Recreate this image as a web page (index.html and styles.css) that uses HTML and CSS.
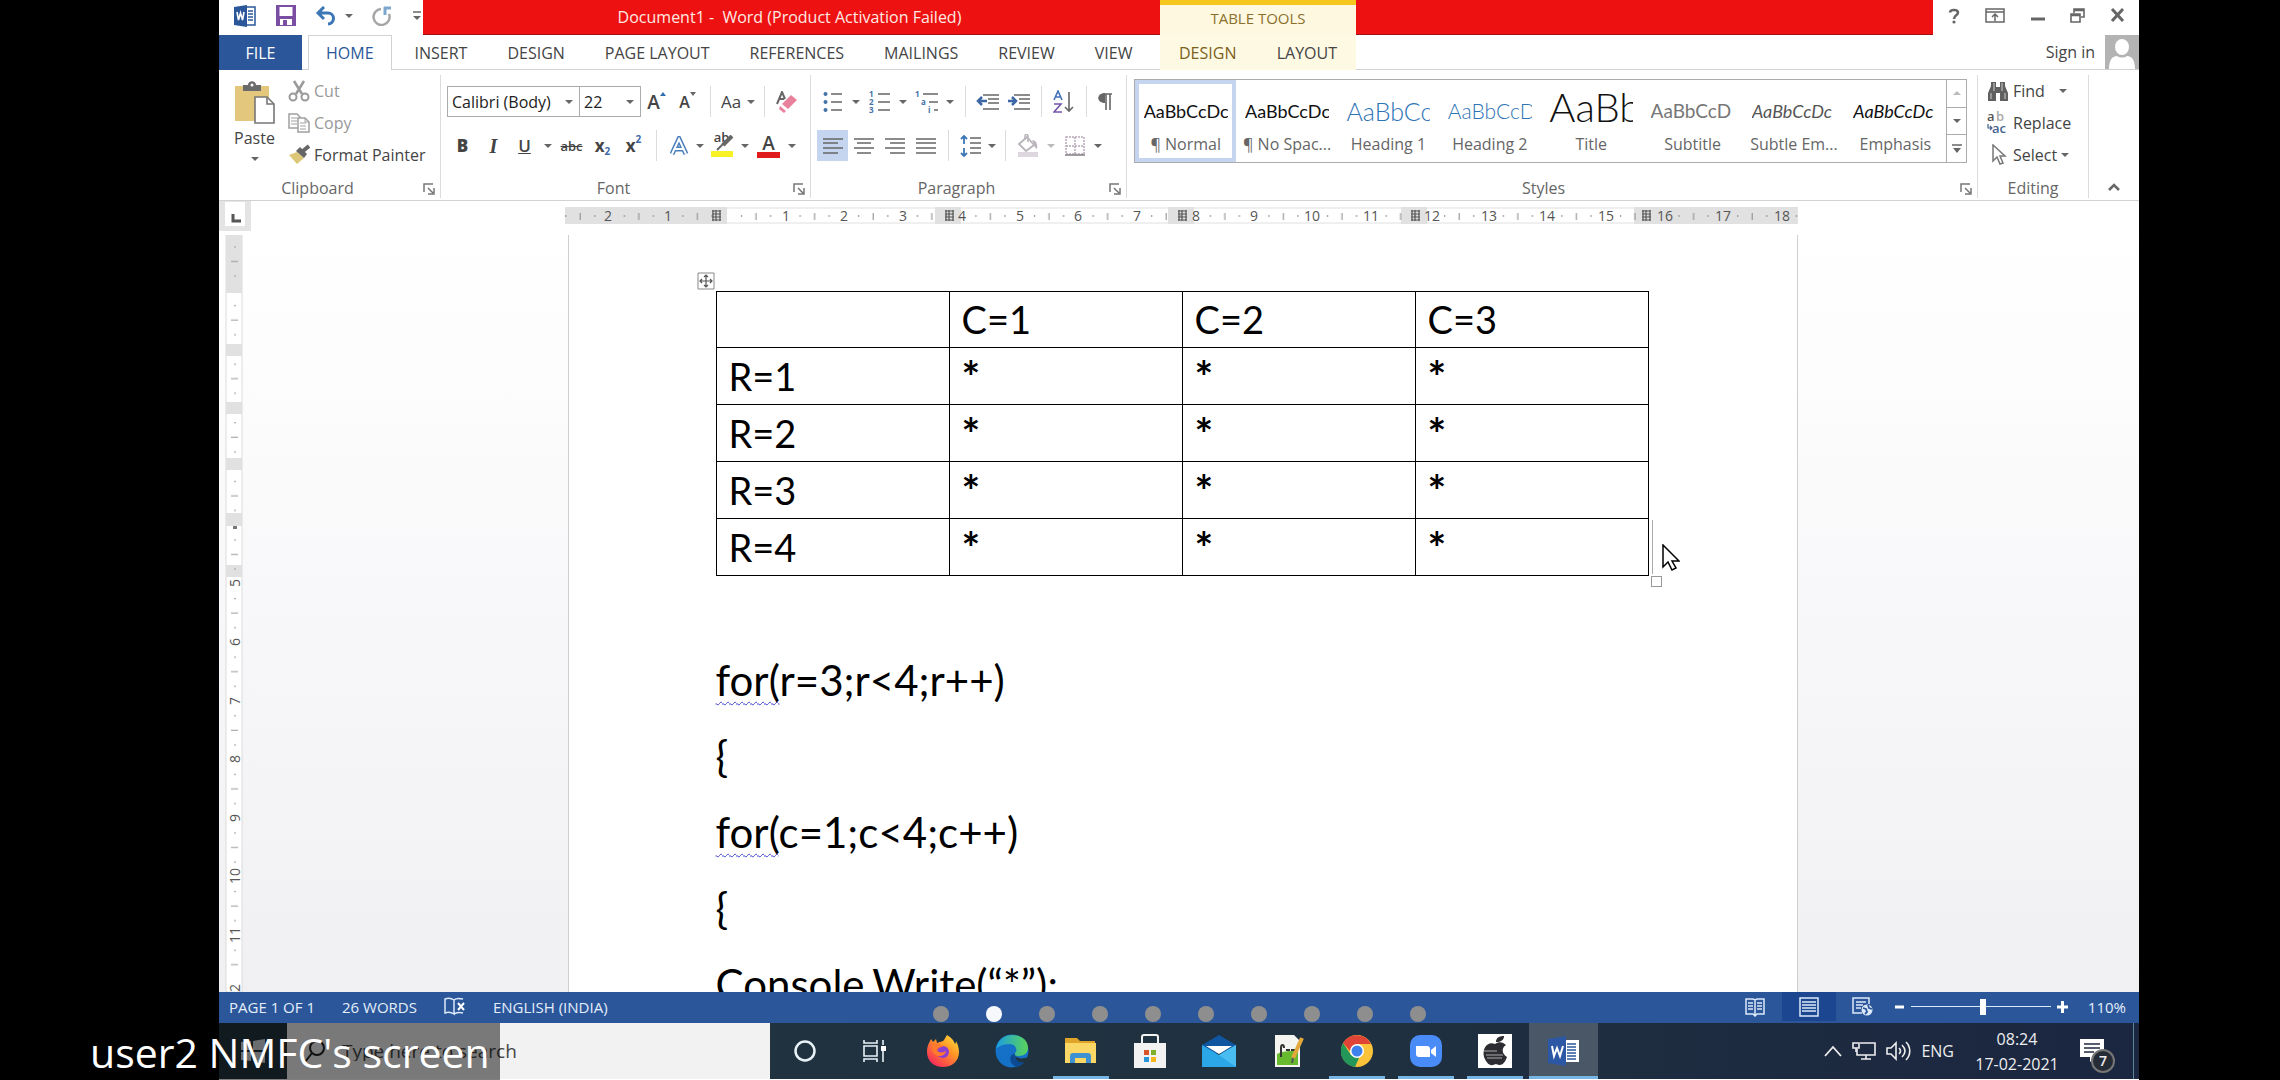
FILE: index.html
```html
<!DOCTYPE html>
<html lang="en">
<head>
  <meta charset="UTF-8">
  <title>Document1 - Word</title>
  <link rel="stylesheet" href="styles.css">
</head>
<body>
  <div class="share">
    <header class="header">
      <div class="titlebar">
        <div class="quick">
          <svg width="24" height="24" viewBox="0 0 24 24"><path d="M12 3h10v18H12z" fill="#fff" stroke="#2b579a" stroke-width="1.5"/><path d="M15 7h5M15 10h5M15 13h5M15 16h5" stroke="#2b579a" stroke-width="1.5"/><path d="M1 3l13-2v22L1 21z" fill="#2b579a"/><path d="M4 8l1.500 8 2-7 2 7L11 8" fill="none" stroke="#fff" stroke-width="1.600"/></svg>
          <button class="plain" aria-label="Save"><svg width="20" height="21" viewBox="0 0 20 21"><path d="M1 1h18v19H1z" fill="#fff" stroke="#7a4fa3" stroke-width="2"/><path d="M1 11h18v9H1z" fill="#7a4fa3"/><path d="M4 14h12v6H4z" fill="#fff"/><path d="M7 15h4v5H7z" fill="#7a4fa3"/><path d="M2 2v10M18 2v10" stroke="#7a4fa3" stroke-width="3"/></svg></button>
          <button class="plain undo" aria-label="Undo"><svg width="22" height="20" viewBox="0 0 22 20"><path d="M3 7h10a5 5 0 0 1 0 11M9 1L3 7l6 6" fill="none" stroke="#3d77b5" stroke-width="3"/></svg><span class="caret"></span></button>
          <button class="plain" aria-label="Repeat"><svg width="22" height="20" viewBox="0 0 22 20"><path d="M9 3a8 8 0 1 0 8 5" fill="none" stroke="#a6a6a6" stroke-width="2.500"/><path d="M12 2h7M13 1v8" stroke="#7da7cf" stroke-width="3"/></svg></button>
          <button class="plain" aria-label="Customize"><svg width="8" height="10" viewBox="0 0 8 10"><path d="M0 1h8" stroke="#666" stroke-width="1.500"/><path d="M0 5h8L4 9z" fill="#666"/></svg></button>
        </div>
        <div class="title">Document1 -&nbsp; Word (Product Activation Failed)</div>
      </div>
      <div class="context-title">TABLE TOOLS</div>
      <div class="title-rest"></div>
      <div class="window-controls">
        <button class="plain" aria-label="Help"><svg width="12" height="16" viewBox="0 0 12 16"><path d="M2 4.500C2 1 10 1 10 4.500 10 7.500 6 7 6 11" fill="none" stroke="#666" stroke-width="2.500"/><circle cx="6" cy="14" r="1.600" fill="#666"/></svg></button>
        <button class="plain" aria-label="Ribbon display options"><svg width="20" height="16" viewBox="0 0 20 16"><path d="M1 1h18v13H1zM1 4h18M10 13V6M7 9l3-3 3 3" fill="none" stroke="#666" stroke-width="1.500"/></svg></button>
        <button class="plain" aria-label="Minimize"><svg width="14" height="16" viewBox="0 0 14 16"><path d="M0 11h14" stroke="#666" stroke-width="3"/></svg></button>
        <button class="plain" aria-label="Restore"><svg width="15" height="15" viewBox="0 0 15 15"><path d="M4 5V1h10v8h-3M4 2.500h10" fill="none" stroke="#666" stroke-width="1.600"/><path d="M1 6h9v8H1zM1 7.500h9" fill="none" stroke="#666" stroke-width="1.600"/></svg></button>
        <button class="plain" aria-label="Close"><svg width="15" height="15" viewBox="0 0 15 15"><path d="M2 1l11 12M13 1L2 13" stroke="#666" stroke-width="3"/></svg></button>
      </div>
      <nav class="tabs">
        <a href="#" class="file">FILE</a>
        <a href="#" class="tab active">HOME</a>
        <a href="#" class="tab">INSERT</a>
        <a href="#" class="tab">DESIGN</a>
        <a href="#" class="tab">PAGE LAYOUT</a>
        <a href="#" class="tab">REFERENCES</a>
        <a href="#" class="tab">MAILINGS</a>
        <a href="#" class="tab">REVIEW</a>
        <a href="#" class="tab">VIEW</a>
      </nav>
      <nav class="context-tabs">
        <a href="#" class="gold">DESIGN</a>
        <a href="#">LAYOUT</a>
      </nav>
      <div class="account">
        <a href="#">Sign in</a>
        <svg width="34" height="34" viewBox="0 0 34 34"><path d="M0 0h34v34H0z" fill="#b3b3b3"/><ellipse cx="17" cy="12" rx="7" ry="8" fill="#fff"/><path d="M4 34c0-10 4-13 8-13 3 2 7 2 10 0 4 0 8 3 8 13z" fill="#fff"/></svg>
      </div>
    </header>

    <section class="ribbon">
      <div class="group clipboard">
        <div class="group-body">
          <button class="paste">
            <svg width="42" height="44" viewBox="0 0 42 44"><path d="M1 5h34v35H1z" fill="#e3c77c"/><path d="M9 10V4h5c0-5 8-5 8 0h5v6z" fill="#6b6b6b"/><circle cx="18" cy="4" r="1.500" fill="#fff"/><path d="M21 16h12l7 7v19H21z" fill="#fff" stroke="#777" stroke-width="1.600"/><path d="M33 16v7h7" fill="none" stroke="#777" stroke-width="1.600"/></svg>
            Paste
            <span class="caret"></span>
          </button>
          <div class="stack">
            <button class="row-btn dim"><svg width="22" height="22" viewBox="0 0 22 22"><path d="M6 1l8 13M16 1L8 14" stroke="#9a9a9a" stroke-width="2.500"/><circle cx="5" cy="17" r="3.500" fill="none" stroke="#9a9a9a" stroke-width="2"/><circle cx="17" cy="17" r="3.500" fill="none" stroke="#9a9a9a" stroke-width="2"/></svg>Cut</button>
            <button class="row-btn dim"><svg width="22" height="22" viewBox="0 0 22 22"><path d="M1 2h8l3 3v11H1z" fill="#fff" stroke="#a0a0a0" stroke-width="1.500"/><path d="M3 6h6M3 9h6M3 12h6" stroke="#a0a0a0"/><path d="M10 6h7l4 4v10H10z" fill="#fff" stroke="#a0a0a0" stroke-width="1.500"/><path d="M12 11h6M12 14h6M12 17h6M17 6v4h4" fill="none" stroke="#a0a0a0"/></svg>Copy</button>
            <button class="row-btn"><svg width="22" height="22" viewBox="0 0 22 22"><path d="M1 11l8-3 7 6-7 6z" fill="#dcc778"/><path d="M8 7l4-4 7 7-3 4z" fill="#666"/><path d="M15 7l6-5" stroke="#666" stroke-width="4"/></svg>Format Painter</button>
          </div>
        </div>
        <div class="group-label"><span>Clipboard</span><svg class="launcher" width="12" height="12" viewBox="0 0 12 12"><path d="M1 9V1h9M5 5l5 5M11 5v6H5" fill="none" stroke="#777" stroke-width="1.500"/></svg></div>
      </div>

      <div class="group font">
        <div class="tool-rows">
          <div class="tools">
            <label class="combo combo-font"><select aria-label="Font"><option>Calibri (Body)</option></select><span class="caret"></span></label>
            <label class="combo combo-size"><select aria-label="Font size"><option>22</option></select><span class="caret"></span></label>
            <button class="tool" aria-label="Grow font"><span class="big-a">A</span><svg class="up" width="6" height="12" viewBox="0 0 6 12"><path d="M0 5h6L3 1z" fill="#2f6db0"/></svg></button>
            <button class="tool" aria-label="Shrink font"><span class="small-a">A</span><svg class="up" width="6" height="12" viewBox="0 0 6 12"><path d="M0 1h6L3 5z" fill="#666"/></svg></button>
            <span class="sep"></span>
            <button class="tool case">Aa</button><span class="caret-box tight"><span class="caret"></span></span>
            <span class="sep"></span>
            <button class="tool" aria-label="Clear formatting"><svg width="22" height="22" viewBox="0 0 22 22"><path d="M1 13L6 1l3 7M3 8h5" fill="none" stroke="#666" stroke-width="2"/><path d="M6 13l9-9 6 5-9 9z" fill="#e8829c"/><path d="M4 15l6 5-2 2-5-4z" fill="#e8829c"/></svg></button>
          </div>
          <div class="tools">
            <button class="tool bold">B</button>
            <button class="tool italic">I</button>
            <button class="tool under">U</button><span class="caret-box"><span class="caret"></span></span>
            <button class="tool strike">abc</button>
            <button class="tool script">x<sub>2</sub></button>
            <button class="tool script">x<sup>2</sup></button>
            <span class="sep"></span>
            <button class="tool" aria-label="Text effects"><svg width="20" height="20" viewBox="0 0 20 20"><path d="M3 18L10 3l7 15M6 13h8" fill="none" stroke="#4a7ebb" stroke-width="5"/><path d="M3 18L10 3l7 15M6 13h8" fill="none" stroke="#fff" stroke-width="2"/></svg></button><span class="caret-box tight"><span class="caret"></span></span>
            <button class="tool marker" aria-label="Highlight color"><span>ab</span><svg width="24" height="22" viewBox="0 0 24 22"><path d="M22 1l-9 9" stroke="#666" stroke-width="4"/><path d="M14 8l-7 7" stroke="#666" stroke-width="2"/><path d="M1 16h22v6H1z" fill="#f8f224"/></svg></button><span class="caret-box"><span class="caret"></span></span>
            <button class="tool color" aria-label="Font color"><span>A</span></button><span class="caret-box"><span class="caret"></span></span>
          </div>
        </div>
        <div class="group-label"><span>Font</span><svg class="launcher" width="12" height="12" viewBox="0 0 12 12"><path d="M1 9V1h9M5 5l5 5M11 5v6H5" fill="none" stroke="#777" stroke-width="1.500"/></svg></div>
      </div>

      <div class="group paragraph">
        <div class="tool-rows">
          <div class="tools">
            <button class="tool" aria-label="Bullets"><svg width="20" height="22" viewBox="0 0 20 22"><path d="M8 3h11M8 11h11M8 19h11" stroke="#666" stroke-width="1.500"/><circle cx="2.500" cy="3" r="2" fill="#4472a8"/><circle cx="2.500" cy="11" r="2" fill="#4472a8"/><circle cx="2.500" cy="19" r="2" fill="#4472a8"/></svg></button><span class="caret-box"><span class="caret"></span></span>
            <button class="tool" aria-label="Numbering"><svg width="22" height="24" viewBox="0 0 22 24"><path d="M9 4h12M9 12h12M9 20h12" stroke="#666" stroke-width="1.500"/><g class="tiny"><text x="0" y="7">1</text><text x="0" y="15">2</text><text x="0" y="23">3</text></g></svg></button><span class="caret-box"><span class="caret"></span></span>
            <button class="tool" aria-label="Multilevel list"><svg width="24" height="24" viewBox="0 0 24 24"><path d="M8 4h15M14 12h9M19 20h4" stroke="#666" stroke-width="1.500"/><g class="tiny"><text x="0" y="7">1</text><text x="6" y="15">a</text><text x="13" y="23">i</text></g></svg></button><span class="caret-box"><span class="caret"></span></span>
            <span class="sep"></span>
            <button class="tool" aria-label="Decrease indent"><svg width="24" height="18" viewBox="0 0 24 18"><path d="M7 2h16M12 6h11M12 10h11M7 16h16" stroke="#666" stroke-width="1.500"/><path d="M11 8H3M6 4L2 8l4 4" fill="none" stroke="#3d68a5" stroke-width="2.500"/></svg></button>
            <button class="tool" aria-label="Increase indent"><svg width="24" height="18" viewBox="0 0 24 18"><path d="M7 2h16M12 6h11M12 10h11M7 16h16" stroke="#666" stroke-width="1.500"/><path d="M1 8h8M5 4l4 4-4 4" fill="none" stroke="#3d68a5" stroke-width="2.500"/></svg></button>
            <span class="sep"></span>
            <button class="tool" aria-label="Sort"><svg width="22" height="24" viewBox="0 0 22 24"><path d="M1 10L5 1l4 9M3 7h4" fill="none" stroke="#4472b8" stroke-width="1.600"/><path d="M1 14h7l-7 8h8" fill="none" stroke="#7356a8" stroke-width="1.600"/><path d="M16 2v19M12 17l4 4 4-4" fill="none" stroke="#666" stroke-width="1.600"/></svg></button>
            <span class="sep"></span>
            <button class="tool pilcrow" aria-label="Show marks"><svg width="16" height="18" viewBox="0 0 16 18"><path d="M7 1h8M9 1v16M13 1v16" fill="none" stroke="#666" stroke-width="1.600"/><path d="M8 0v10C-1 10-1 0 8 0z" fill="#666"/></svg></button>
          </div>
          <div class="tools">
            <button class="tool on" aria-label="Align left"><svg width="20" height="16" viewBox="0 0 20 16"><path d="M0 1h20M0 5h15M0 10h20M0 15h15" stroke="#666" stroke-width="1.500"/></svg></button>
            <button class="tool" aria-label="Center"><svg width="20" height="16" viewBox="0 0 20 16"><path d="M0 1h20M3 5h14M0 10h20M3 15h14" stroke="#666" stroke-width="1.500"/></svg></button>
            <button class="tool" aria-label="Align right"><svg width="20" height="16" viewBox="0 0 20 16"><path d="M0 1h20M5 5h15M0 10h20M5 15h15" stroke="#666" stroke-width="1.500"/></svg></button>
            <button class="tool" aria-label="Justify"><svg width="20" height="16" viewBox="0 0 20 16"><path d="M0 1h20M0 5h20M0 10h20M0 15h20" stroke="#666" stroke-width="1.500"/></svg></button>
            <span class="sep"></span>
            <button class="tool" aria-label="Line spacing"><svg width="22" height="24" viewBox="0 0 22 24"><path d="M10 4h11M10 9h11M10 14h11M10 19h11" stroke="#666" stroke-width="1.500"/><path d="M4 2v8M1 5l3-3 3 3M4 14v8M1 19l3 3 3-3" fill="none" stroke="#3d77b5" stroke-width="1.800"/></svg></button><span class="caret-box tight"><span class="caret"></span></span>
            <span class="sep"></span>
            <button class="tool" aria-label="Shading"><svg width="22" height="24" viewBox="0 0 22 24"><path d="M2 10l8-7 7 8-8 6z" fill="#fff" stroke="#b9b3ba" stroke-width="1.800"/><path d="M8 6V2c0-2 3-2 3 0v6" fill="none" stroke="#b9b3ba" stroke-width="1.500"/><path d="M15 6c4 0 6 4 5 9-2-1-3-3-3-5z" fill="#b9b3ba"/><path d="M1 18h20v5H1z" fill="#ddd6de"/></svg></button><span class="caret-box pale"><span class="caret"></span></span>
            <button class="tool" aria-label="Borders"><svg width="20" height="20" viewBox="0 0 20 20"><path d="M1 1h18v17H1zM10 1v17M1 10h18" fill="none" stroke="#b8a8b8" stroke-width="1.500" stroke-dasharray="2 1"/><path d="M0 19h20" stroke="#888" stroke-width="1.600"/></svg></button><span class="caret-box"><span class="caret"></span></span>
          </div>
        </div>
        <div class="group-label"><span>Paragraph</span><svg class="launcher" width="12" height="12" viewBox="0 0 12 12"><path d="M1 9V1h9M5 5l5 5M11 5v6H5" fill="none" stroke="#777" stroke-width="1.500"/></svg></div>
      </div>

      <div class="group styles">
        <div class="gallery">
          <button class="style selected"><span class="sample">AaBbCcDc</span><span>¶ Normal</span></button>
          <button class="style"><span class="sample">AaBbCcDc</span><span>¶ No Spac...</span></button>
          <button class="style"><span class="sample h1">AaBbCc</span><span>Heading 1</span></button>
          <button class="style"><span class="sample h2">AaBbCcD</span><span>Heading 2</span></button>
          <button class="style"><span class="sample big">AaBb</span><span>Title</span></button>
          <button class="style"><span class="sample sub">AaBbCcD</span><span>Subtitle</span></button>
          <button class="style"><span class="sample subtle">AaBbCcDc</span><span>Subtle Em...</span></button>
          <button class="style"><span class="sample em">AaBbCcDc</span><span>Emphasis</span></button>
          <div class="gallery-scroll">
            <button class="pale" aria-label="Up"><span class="caret flip"></span></button>
            <button aria-label="Down"><span class="caret"></span></button>
            <button aria-label="More"><svg width="10" height="10" viewBox="0 0 10 10"><path d="M0 1h10" stroke="#666" stroke-width="1.500"/><path d="M1 4h8L5 9z" fill="#666"/></svg></button>
          </div>
        </div>
        <div class="group-label"><span>Styles</span><svg class="launcher" width="12" height="12" viewBox="0 0 12 12"><path d="M1 9V1h9M5 5l5 5M11 5v6H5" fill="none" stroke="#777" stroke-width="1.500"/></svg></div>
      </div>

      <div class="group editing">
        <div class="stack">
          <button class="row-btn"><svg width="22" height="22" viewBox="0 0 22 22"><path d="M4 2h5v5h4V2h5v4l3 7v8h-8v-8H9v8H1v-8l3-7z" fill="#606060"/><path d="M4 13v6M18 13v6M7 3v8M15 3v8" stroke="#ccc"/></svg>Find<span class="caret far"></span></button>
          <button class="row-btn"><svg class="replace" width="22" height="24" viewBox="0 0 22 24"><text x="0" y="10" fill="#555">a</text><text x="9" y="10" fill="#aaa">b</text><text x="5" y="22" fill="#44618f">ac</text><path d="M1 13v4h4M3 15l2 2-2 2" fill="none" stroke="#44618f" stroke-width="1.200"/></svg>Replace</button>
          <button class="row-btn"><svg width="22" height="22" viewBox="0 0 22 22"><path d="M6 1v16l4-4 3 7 3-1-3-7h5z" fill="#fff" stroke="#777" stroke-width="1.500"/></svg>Select<span class="caret"></span></button>
        </div>
        <div class="group-label"><span>Editing</span></div>
      </div>
      <button class="collapse" aria-label="Collapse ribbon"><svg width="12" height="10" viewBox="0 0 12 10"><path d="M1 8l5-5 5 5" fill="none" stroke="#666" stroke-width="2.500"/></svg></button>
    </section>

    <main class="workspace">
      <div class="side">
        <div class="tab-stop"><svg width="20" height="24" viewBox="0 0 20 24"><path d="M0 0h20v24H0z" fill="#fff"/><path d="M8 12v7h8" fill="none" stroke="#555" stroke-width="3"/></svg></div>
        <svg class="ruler-v" width="18" height="757" viewBox="0 0 18 757">
          <defs><pattern id="vticks" width="18" height="58.600" y="349" patternUnits="userSpaceOnUse"><path d="M9 14.600h2M6 29h7M9 43.600h2" stroke="#999"/></pattern></defs>
          <path d="M1 0h16v757H1z" fill="#fff" stroke="#dcdcdc"/>
          <path d="M1 0h16v58H1zM1 109h16v12H1zM1 167h16v12H1zM1 223h16v12H1zM1 278h16v13H1zM1 330h16v12H1z" fill="#e1e1e1"/>
          <path d="M0 0h18v740H0z" fill="url(#vticks)"/>
          <path d="M8 291h4v3H8z" fill="#777"/>
          <g class="ruler-text">
            <text transform="translate(15 348) rotate(-90)">5</text><text transform="translate(15 407) rotate(-90)">6</text>
            <text transform="translate(15 466) rotate(-90)">7</text><text transform="translate(15 524) rotate(-90)">8</text>
            <text transform="translate(15 583) rotate(-90)">9</text><text transform="translate(15 641) rotate(-90)">10</text>
            <text transform="translate(15 700) rotate(-90)">11</text><text transform="translate(15 757) rotate(-90)">12</text>
          </g>
        </svg>
      </div>
      <div class="canvas">
        <svg class="ruler-h" width="1233" height="18" viewBox="0 0 1233 18">
          <defs>
            <pattern id="hticks" width="58.600" height="18" x="162" patternUnits="userSpaceOnUse"><path d="M14.600 8v2M29 6v7M43.600 8v2" stroke="#888"/></pattern>
            <g id="mark"><path d="M1 3h9M1 6h9M1 9h9M1 12h9M2 2v11M5 2v11M9 2v11" stroke="#555" stroke-width="1.200"/></g>
          </defs>
          <path d="M0 1h1233v15H0z" fill="#fff" stroke="#e0e0e0"/>
          <path d="M0 0h162v17H0zM370 0h26v17h-26zM603 0h26v17h-26zM836 0h26v17h-26zM1069 0h164v17h-164z" fill="#e1e1e1"/>
          <path d="M0 0h1233v17H0z" fill="url(#hticks)"/>
          <use href="#mark" x="146" y="1"/><use href="#mark" x="379" y="1"/><use href="#mark" x="612" y="1"/><use href="#mark" x="845" y="1"/><use href="#mark" x="1076" y="1"/>
          <g class="ruler-text">
            <text x="43" y="14">2</text><text x="103" y="14">1</text><text x="221" y="14">1</text><text x="279" y="14">2</text>
            <text x="338" y="14">3</text><text x="397" y="14">4</text><text x="455" y="14">5</text><text x="513" y="14">6</text>
            <text x="572" y="14">7</text><text x="631" y="14">8</text><text x="689" y="14">9</text><text x="747" y="14">10</text>
            <text x="806" y="14">11</text><text x="867" y="14">12</text><text x="924" y="14">13</text><text x="982" y="14">14</text>
            <text x="1041" y="14">15</text><text x="1100" y="14">16</text><text x="1158" y="14">17</text><text x="1217" y="14">18</text>
          </g>
        </svg>
        <article class="page">
          <div class="table-wrap">
            <svg class="move" width="18" height="18" viewBox="0 0 18 18"><path d="M1 1h16v16H1z" fill="#fff" stroke="#888"/><path d="M9 4v10M4 9h10M7 5l2-2 2 2M7 13l2 2 2-2M5 7L3 9l2 2M13 7l2 2-2 2" fill="none" stroke="#555" stroke-width="1.200"/></svg>
            <table>
              <tr><th></th><th>C=1</th><th>C=2</th><th>C=3</th></tr>
              <tr><td>R=1</td><td class="star">*</td><td class="star">*</td><td class="star">*</td></tr>
              <tr><td>R=2</td><td class="star">*</td><td class="star">*</td><td class="star">*</td></tr>
              <tr><td>R=3</td><td class="star">*</td><td class="star">*</td><td class="star">*</td></tr>
              <tr><td>R=4</td><td class="star">*</td><td class="star">*</td><td class="star">*</td></tr>
            </table>
            <span class="text-cursor"></span>
            <span class="resize"></span>
            <svg class="pointer" width="18" height="28" viewBox="0 0 18 28"><path d="M1 1v22l5-5 4 8 4-2-4-7h7z" fill="#fff" stroke="#000" stroke-width="1.500"/></svg>
          </div>
          <div class="code">
            <p><span class="squiggle">for(</span>r=3;r&lt;4;r++)</p>
            <p>{</p>
            <p><span class="squiggle">for(</span>c=1;c&lt;4;c++)</p>
            <p>{</p>
            <p>Console.Write(“*”);</p>
          </div>
        </article>
      </div>
    </main>

    <footer class="status">
      <span>PAGE 1 OF 1</span>
      <span>26 WORDS</span>
      <svg width="22" height="20" viewBox="0 0 22 20"><path d="M10 3C7 1 4 1 1 2v14c3-1 6-1 9 1V3c2-2 5-2 9-1M10 17c2-1 5-2 9-1" fill="none" stroke="#dce9fa" stroke-width="1.500"/><path d="M14 6l6 7M20 6l-6 7" stroke="#fff" stroke-width="2"/></svg>
      <span>ENGLISH (INDIA)</span>
      <div class="views">
        <button aria-label="Read mode"><svg width="20" height="20" viewBox="0 0 20 20"><path d="M1 2h7l2 1 2-1h7v15h-7l-2 2-2-2H1zM10 3v15" fill="none" stroke="#dce9fa" stroke-width="1.500"/><path d="M3 6h5M3 9h5M3 12h5M12 6h5M12 9h5M12 12h5" stroke="#dce9fa" stroke-width="1.500"/></svg></button>
        <button class="current" aria-label="Print layout"><svg width="20" height="20" viewBox="0 0 20 20"><path d="M1 1h18v18H1z" fill="none" stroke="#dce9fa" stroke-width="1.500"/><path d="M3 5h14M3 8h14M3 11h14M3 14h14" stroke="#dce9fa" stroke-width="1.500"/></svg></button>
        <button aria-label="Web layout"><svg width="21" height="20" viewBox="0 0 21 20"><path d="M10 16H1V1h16v6M4 5h10M4 8h7M4 11h5" fill="none" stroke="#dce9fa" stroke-width="1.500"/><circle cx="15" cy="13" r="5.500" fill="#dce9fa"/><path d="M11 11l3 1 1 3-2 2M16 8l1 3 3 1" fill="none" stroke="#2b579a" stroke-width="1.800"/></svg></button>
      </div>
      <div class="zoom">
        <button aria-label="Zoom out"><svg width="11" height="12" viewBox="0 0 11 12"><path d="M1 6h9" stroke="#fff" stroke-width="3"/></svg></button>
        <input type="range" min="10" max="204" value="110" aria-label="Zoom">
        <button aria-label="Zoom in"><svg width="11" height="12" viewBox="0 0 11 12"><path d="M0 6h11M5.500 0v12" stroke="#fff" stroke-width="3"/></svg></button>
      </div>
      <span class="percent">110%</span>
    </footer>

    <div class="taskbar">
      <button class="start" aria-label="Start"><svg width="24" height="24" viewBox="0 0 24 24"><path d="M0 3l10-1v9H0zM12 2l12-2v11H12zM0 13h10v9L0 21zM12 13h12v11l-12-2z" fill="#d5dbe0"/></svg></button>
      <label class="search">
        <svg width="22" height="24" viewBox="0 0 22 24"><circle cx="13" cy="9" r="7" fill="none" stroke="#222" stroke-width="2"/><path d="M8 14l-7 9" stroke="#222" stroke-width="2"/></svg>
        <input type="text" placeholder="Type here to search" aria-label="Search">
      </label>
      <div class="apps">
        <button aria-label="Cortana"><svg width="24" height="24" viewBox="0 0 24 24"><circle cx="12" cy="12" r="9.500" fill="none" stroke="#e8f2f7" stroke-width="2.500"/></svg></button>
        <button aria-label="Task view"><svg width="24" height="24" viewBox="0 0 24 24"><path d="M2 1v3h13V1M2 23v-3h13v3M2 7h13v10H2zM21 1v5M21 12v11" fill="none" stroke="#e8f2f7" stroke-width="1.600"/><path d="M19 7h5v5h-5z" fill="#fff"/></svg></button>
        <button aria-label="Firefox"><svg width="34" height="34" viewBox="0 0 34 34"><defs><linearGradient id="ff" x1="1" x2="0.200" y2="1"><stop offset="0" stop-color="#ffe83c"/><stop offset=".45" stop-color="#ff9427"/><stop offset="1" stop-color="#f6235d"/></linearGradient></defs><path d="M21 1c5 3 7 6 8 9 1-1 1-2 1-3 2 4 3 7 3 11 0 9-7 15-16 15S1 27 1 18C1 12 3 9 5 5l2 3 3-3 1 4c4-2 6-1 7-3s2-3 3-5z" fill="url(#ff)"/><circle cx="17" cy="18" r="6" fill="#8a3fd1"/><path d="M6 10c5-2 9 0 11 3-4 0-5 1-6 3 1 3 6 3 9 1-1 7-13 7-14-2z" fill="#ff7a2c"/></svg></button>
        <button aria-label="Edge"><svg width="34" height="34" viewBox="0 0 34 34"><defs><linearGradient id="edge"><stop offset="0" stop-color="#1b9de0"/><stop offset="1" stop-color="#5bd45a"/></linearGradient></defs><circle cx="17" cy="17" r="16.500" fill="#1471c7"/><path d="M1 15C3 5 10 1 17 1c10 0 16 6 16 13 0 5-4 8-9 8-4 0-5-1-4-3 3-3 1-9-6-9C8 10 3 13 1 15z" fill="url(#edge)"/><path d="M20 19c-3 6 6 10 12 5-2 3-5 7-10 9-7-2-10-11-2-14z" fill="#0c4a91"/><path d="M20 19c-1 5 6 7 13 4l1 5c-8 2-15-1-14-9z" fill="#20333f"/></svg></button>
        <button class="open" aria-label="File Explorer"><svg width="32" height="26" viewBox="0 0 32 26"><path d="M0 0h12l3 3h15v4H0z" fill="#e0a428"/><path d="M0 5h31v20H0z" fill="#fbd766"/><path d="M5 25v-7c0-2 1-3 3-3h15c2 0 3 1 3 3v7h-5v-5H10v5z" fill="#3f92d2"/></svg></button>
        <button aria-label="Store"><svg width="34" height="34" viewBox="0 0 34 34"><path d="M9 10V3c0-1 1-2 2-2h12c1 0 2 1 2 2v7" fill="none" stroke="#f2f2f2" stroke-width="2"/><path d="M1 9h32v25H1z" fill="#f2f2f2"/><path d="M11 16h5v5h-5z" fill="#d8552c"/><path d="M18 16h5v5h-5z" fill="#7eb02c"/><path d="M11 23h5v5h-5z" fill="#2796d6"/><path d="M18 23h5v5h-5z" fill="#f4b81c"/></svg></button>
        <button aria-label="Mail"><svg width="34" height="34" viewBox="0 0 34 34"><path d="M0 11L17 1l17 10v8H0z" fill="#0f559f"/><path d="M0 11l17 10 17-10v22H0z" fill="#2ba7e8"/><path d="M4 12h26L17 20z" fill="#fff"/><path d="M17 21l17-10v22z" fill="#49bdf2"/></svg></button>
        <button aria-label="Notepad++"><svg width="32" height="34" viewBox="0 0 32 34"><path d="M3 1h19l6 6v26H3z" fill="#f4f4f0"/><path d="M5 20c8-4 14-2 21-4v15H5z" fill="#67b92e"/><path d="M9 23v-9c0-4 3-4 3 0M14 16h4M19 16h4" fill="none" stroke="#333" stroke-width="2"/><path d="M30 4l-9 20" stroke="#e2a93a" stroke-width="4"/><path d="M21 24l-1 5" stroke="#555" stroke-width="2"/></svg></button>
        <button class="open" aria-label="Chrome"><svg width="32" height="32" viewBox="0 0 32 32"><circle cx="16" cy="16" r="16" fill="#fbc33a"/><path d="M2 8A16 16 0 0 1 30 9H16l-7 7z" fill="#df4436"/><path d="M2 8l8 12 8 3-4 9A16 16 0 0 1 2 8z" fill="#23965a"/><circle cx="16" cy="16" r="7" fill="#fff"/><circle cx="16" cy="16" r="5.500" fill="#3f81ec"/></svg></button>
        <button class="open" aria-label="Zoom"><svg width="32" height="32" viewBox="0 0 32 32"><rect width="32" height="32" rx="10" fill="#4a8cf7"/><path d="M6 11h11c2 0 3 1 3 3v8H9c-2 0-3-1-3-3zM21 15l5-4v11l-5-4z" fill="#fff"/></svg></button>
        <button class="open" aria-label="Apple app"><svg width="34" height="34" viewBox="0 0 34 34"><path d="M0 0h34v34H0z" fill="#fff"/><path d="M17 10c4-3 8-2 11 1-5 3-4 9 1 12-3 8-6 9-11 7-6 3-9 0-12-7-2-8 3-16 11-13zM18 8c0-4 3-6 8-6 0 4-3 6-8 6z" fill="#2e2c33"/><path d="M6 17h13M8 21h17M9 24h15" stroke="#aaa" stroke-width="1.200"/></svg></button>
        <button class="open current" aria-label="Word"><svg width="34" height="30" viewBox="0 0 34 30"><path d="M15 4h17v22H15z" fill="#fff"/><path d="M20 8h9M20 11h9M20 14h9M20 17h9M20 20h9M20 23h9" stroke="#2b579a" stroke-width="1.500"/><path d="M1 3l18-3v30L1 27z" fill="#2b57a5"/><path d="M5 10l2 10 3-8 3 8 3-10" fill="none" stroke="#fff" stroke-width="2"/></svg></button>
      </div>
      <div class="tray">
        <svg width="18" height="12" viewBox="0 0 18 12"><path d="M1 11l8-9 8 9" fill="none" stroke="#eee" stroke-width="1.800"/></svg>
        <svg width="24" height="20" viewBox="0 0 24 20"><path d="M8 2h15v12H5V8M14 14v4M9 18h10" fill="none" stroke="#eee" stroke-width="1.600"/><path d="M1 2h6v5H1zM4 7v4" fill="none" stroke="#eee" stroke-width="1.600"/></svg>
        <svg width="25" height="20" viewBox="0 0 25 20"><path d="M1 7h4l5-5v16l-5-5H1zM13 7c2 2 2 4 0 6M16 4c4 4 4 8 0 12M20 1c5 5 5 13 0 18" fill="none" stroke="#eee" stroke-width="1.600"/></svg>
        <span class="lang">ENG</span>
        <div class="clock"><span>08:24</span><span>17-02-2021</span></div>
        <div class="notify">
          <svg width="24" height="24" viewBox="0 0 24 24"><path d="M0 0h24v18h-9l-5 5v-5H0z" fill="#fff"/><path d="M4 5h16M4 9h16M4 13h10" stroke="#1c2a3c" stroke-width="1.500"/></svg>
          <span class="count">7</span>
        </div>
      </div>
    </div>

    <div class="dots"><i></i><i class="lit"></i><i></i><i></i><i></i><i></i><i></i><i></i><i></i><i></i></div>
  </div>
  <div class="caption">user2 NMFC's screen</div>
</body>
</html>
```
FILE: styles.css
```css
* { box-sizing: border-box; }
body {
  margin: 0;
  background: #000;
  color: #444;
  font-family: "Open Sans", "Noto Sans", sans-serif;
  font-size: 16px;
  line-height: 20px;
}
button, select, input {
  font: inherit;
  color: inherit;
  background: none;
  border: 0;
  margin: 0;
  padding: 0;
}
a { color: inherit; text-decoration: none; }
svg { display: block; flex: none; }
.share {
  position: relative;
  display: flex;
  flex-direction: column;
  height: 100vh;
  margin: 0 141px 0 219px;
  padding-bottom: 1px;
  background: #fff;
  overflow: hidden;
}

/* title bar and tabs */
.header {
  display: grid;
  grid-template-columns: 941px 196px 1fr 206px;
  grid-template-rows: 35px 35px;
  border-bottom: 1px solid #d2d2d2;
  flex: none;
  height: 70px;
}
.titlebar { display: flex; }
.quick {
  display: flex;
  align-items: center;
  gap: 19px;
  width: 204px;
  padding: 0 4px 4px 14px;
}
.plain { display: flex; align-items: center; gap: 8px; }
.title {
  flex: 1;
  padding-right: 4px;
  text-align: center;
  color: #ffe9e2;
  line-height: 35px;
}
.title, .title-rest {
  background: #ed1111;
  border-bottom: 1px solid #9c1515;
}
.context-title {
  background: #fef8e0;
  border-top: 5px solid #f5c71c;
  color: #8a702c;
  text-align: center;
  font-size: 15px;
  line-height: 26px;
}
.window-controls {
  display: flex;
  align-items: center;
  justify-content: space-between;
  padding: 0 14px 4px 15px;
}
.tabs { display: flex; }
.tabs a { line-height: 36px; }
.file {
  width: 83px;
  margin-right: 6px;
  background: #2b579a;
  color: #fff;
  text-align: center;
}
.tab { padding: 0 20px; }
.tab.active {
  height: 35px;
  margin-right: 3px;
  padding: 0 17px;
  border: 1px solid #d2d2d2;
  border-bottom: 0;
  background: #fff;
  color: #2b579a;
}
.tabs .active { line-height: 34px; }
.context-tabs {
  display: flex;
  justify-content: space-between;
  padding: 0 19px;
  background: #fef9e3;
  line-height: 36px;
}
.gold { color: #7c5f1a; }
.account {
  grid-column: 3 / 5;
  display: flex;
  justify-content: flex-end;
  gap: 10px;
  line-height: 34px;
}

/* ribbon */
.ribbon {
  display: flex;
  flex: none;
  height: 131px;
  padding: 5px 0 2px;
  border-bottom: 1px solid #d2d2d2;
}
.group {
  display: flex;
  flex: none;
  flex-direction: column;
  justify-content: space-between;
  border-right: 1px solid #dcdcdc;
}
.clipboard { width: 222px; }
.font { width: 370px; }
.paragraph { width: 316px; }
.styles { flex: 1; min-width: 0; padding-left: 7px; }
.editing { width: 111px; }
.group-label {
  display: flex;
  justify-content: center;
  align-items: center;
  position: relative;
  padding-right: 24px;
  color: #666;
}
.editing .group-label { padding-right: 0; }
.launcher { position: absolute; right: 5px; bottom: 3px; }
.group-body { display: flex; }
.caret {
  flex: none;
  border: 4px solid transparent;
  border-top-color: #666;
  border-bottom: 0;
}
.caret.flip { transform: rotate(180deg); }
.pale .caret { border-top-color: #bbb; }
.paste {
  display: flex;
  flex-direction: column;
  align-items: center;
  width: 69px;
  padding: 6px 0 0 2px;
  gap: 3px;
}
.paste .caret { margin-top: 6px; }
.stack { display: flex; flex-direction: column; }
.row-btn {
  display: flex;
  align-items: center;
  gap: 4px;
  height: 32px;
  white-space: nowrap;
}
.row-btn.dim { color: #999; }
.row-btn .caret.far { margin-left: 10px; }
.editing .row-btn { padding-left: 9px; }
.replace text { font-size: 13px; font-weight: 600; }
.tool-rows {
  display: flex;
  flex-direction: column;
  gap: 13px;
  padding: 11px 0 0 6px;
}
.tools { display: flex; height: 31px; }
.tool {
  display: flex;
  align-items: center;
  justify-content: center;
  width: 31px;
  font-weight: 600;
}
.tool.on { background: #c5d5f0; }
.tool.pilcrow { width: 24px; }
.caret-box {
  display: flex;
  align-items: center;
  justify-content: center;
  width: 16px;
}
.caret-box.tight { width: 12px; }
.sep {
  width: 14px;
  background: linear-gradient(#dcdcdc, #dcdcdc) center / 1px 100% no-repeat;
}
.combo {
  display: flex;
  align-items: center;
  border: 1px solid #ababab;
  padding: 0 6px 0 4px;
}
.combo select { appearance: none; flex: 1; min-width: 0; color: #222; }
.combo-font { width: 133px; }
.combo-size { width: 61px; border-left: 0; }
.big-a { font-size: 19px; }
.small-a { font-size: 16px; }
.up { align-self: flex-start; margin-top: 5px; }
.case { width: 28px; font-size: 17px; font-weight: 400; }
.bold { font-weight: 800; font-size: 17px; }
.italic { font-family: "Liberation Serif", serif; font-size: 20px; font-style: italic; font-weight: 700; }
.under { font-size: 17px; text-decoration: underline; }
.strike { font-size: 13px; text-decoration: line-through; }
.script { font-size: 17px; font-weight: 700; }
.script sub, .script sup { font-size: 10px; line-height: 12px; color: #3d68a5; }
.script sub { align-self: flex-end; margin-bottom: 4px; }
.script sup { align-self: flex-start; margin-top: 3px; }
.tiny text { font-size: 8px; font-weight: 700; fill: #4472a8; }
.marker { position: relative; font-size: 13px; line-height: 14px; }
.marker span { align-self: flex-start; }
.marker svg { position: absolute; left: 4px; top: 5px; }
.color span {
  width: 23px;
  border-bottom: 6px solid #e01b1b;
  font-size: 19px;
  line-height: 18px;
}
.gallery {
  display: flex;
  height: 84px;
  margin: 4px 10px 0 0;
  border: 1px solid #ababab;
}
.style {
  flex: 1;
  min-width: 0;
  display: flex;
  flex-direction: column;
  align-items: center;
  padding: 2px 0;
  border: 4px solid transparent;
  color: #666;
  white-space: nowrap;
}
.style.selected { border-color: #c5d5f0; }
.sample {
  width: 84px;
  height: 48px;
  overflow: hidden;
  font-family: Lato, sans-serif;
  font-size: 18px;
  line-height: 50px;
  color: #111;
  text-align: left;
}
.sample.h1 { font-size: 25px; font-weight: 300; color: #2e74b5; }
.sample.h2 { font-size: 21px; font-weight: 300; color: #2e74b5; }
.sample.big { font-size: 40px; font-weight: 300; line-height: 42px; }
.sample.sub { font-size: 19px; color: #777; }
.sample.subtle { font-style: italic; color: #555; }
.sample.em { font-style: italic; }
.gallery-scroll {
  display: flex;
  flex-direction: column;
  width: 20px;
  border-left: 1px solid #ababab;
}
.gallery-scroll button {
  flex: 1;
  display: flex;
  align-items: center;
  justify-content: center;
}
.gallery-scroll button + button { border-top: 1px solid #ababab; }
.collapse {
  display: flex;
  flex: none;
  justify-content: center;
  align-self: flex-end;
  width: 50px;
  height: 16px;
}

/* document area */
.workspace {
  flex: 1;
  min-height: 0;
  display: flex;
  overflow: hidden;
  background: linear-gradient(#fff, #fdfdfd 20%, #f8f7f9 50%, #f0eff1);
}
.side { width: 32px; }
.tab-stop { height: 30px; padding: 1px 6px; background: #e4e4e4; }
.ruler-v { margin: 4px 0 0 6px; }
.ruler-text { font-size: 14px; fill: #555; text-anchor: middle; }
.canvas {
  flex: 1;
  display: flex;
  flex-direction: column;
  align-items: center;
  padding: 6px 28px 0 0;
}
.page {
  flex: 1;
  width: 1230px;
  margin: 10px 0 0 3px;
  padding: 56px 148px 0 147px;
  background: #fff;
  border: 1px solid #cfcfcf;
  border-width: 0 1px;
  color: #000;
  font-family: Lato, sans-serif;
  font-size: 38px;
  line-height: 46px;
}
.table-wrap { position: relative; }
table {
  width: 100%;
  border-collapse: collapse;
  table-layout: fixed;
}
th, td {
  height: 56px;
  padding: 4px 12px 5px;
  border: 1px solid #000;
  text-align: left;
  font-weight: 400;
}
.star { font-size: 44px; font-weight: 700; padding-top: 5px; }
.move { position: absolute; left: -19px; top: -19px; }
.text-cursor {
  position: absolute;
  right: -4px;
  bottom: 2px;
  height: 54px;
  border-left: 1px solid #aaa;
}
.resize {
  position: absolute;
  right: -13px;
  bottom: -11px;
  width: 11px;
  height: 11px;
  border: 1px solid #999;
}
.pointer { position: absolute; right: -31px; bottom: 4px; }
.code { padding-top: 81px; font-size: 42px; }
.code p { margin: 0 0 30px; }
.squiggle {
  text-decoration: underline wavy #4040d0 1px;
  text-underline-offset: 5px;
  text-decoration-skip-ink: none;
}

/* status bar */
.status {
  display: flex;
  align-items: center;
  flex: none;
  gap: 27px;
  height: 31px;
  padding: 0 13px 2px 10px;
  background: #2b579a;
  color: #e4eefb;
  font-size: 15px;
}
.views { display: flex; align-self: stretch; margin-left: auto; }
.views button {
  display: flex;
  align-items: center;
  justify-content: center;
  width: 54px;
}
.views .current { background: #1d4690; }
.zoom { display: flex; align-items: center; gap: 6px; margin-left: -23px; }
.zoom input {
  appearance: none;
  width: 140px;
  height: 16px;
  background: linear-gradient(#dce9fa, #dce9fa) center / 100% 1px no-repeat;
}
.zoom input::-webkit-slider-thumb {
  appearance: none;
  width: 6px;
  height: 16px;
  background: #fff;
}
.percent { margin-left: -7px; }

/* windows taskbar */
.taskbar {
  display: flex;
  flex: none;
  height: 56px;
  background: linear-gradient(90deg, #22353f, #1f3040 60%, #1b2640);
}
.start {
  display: flex;
  align-items: center;
  justify-content: center;
  width: 68px;
}
.search {
  display: flex;
  align-items: center;
  gap: 16px;
  width: 483px;
  padding-left: 17px;
  background: #f2f2f2;
}
.search input { flex: 1; font-size: 19px; }
.search input::placeholder { color: #444; opacity: 1; }
.apps { display: flex; }
.apps button {
  display: flex;
  align-items: center;
  justify-content: center;
  width: 69px;
}
.apps .open { background: linear-gradient(#76b5e4, #76b5e4) center bottom / 56px 3px no-repeat; }
.apps .current {
  background-color: #4a5766;
  background-size: 100% 3px;
}
.tray {
  display: flex;
  align-items: center;
  gap: 10px;
  margin-left: auto;
  margin-right: 5px;
  padding-right: 29px;
  border-right: 1px solid #5b8599;
  color: #eee;
}
.clock {
  display: flex;
  flex-direction: column;
  align-items: center;
  gap: 5px;
  width: 106px;
}
.notify { position: relative; }
.count {
  position: absolute;
  left: 11px;
  top: 10px;
  width: 24px;
  height: 24px;
  border: 2px solid #777;
  border-radius: 50%;
  background: #262c36;
  text-align: center;
  font-size: 14px;
  font-weight: 600;
}

/* meeting overlay */
.dots {
  position: absolute;
  left: 0;
  right: 0;
  bottom: 58px;
  display: flex;
  justify-content: center;
  gap: 37px;
}
.dots i {
  width: 16px;
  height: 16px;
  border-radius: 50%;
  background: #8e8e8e;
}
.dots .lit { background: #f6f8fc; }
.caption {
  position: absolute;
  left: 0;
  bottom: 0;
  height: 57px;
  padding: 0 10px 0 90px;
  background: rgba(0, 0, 0, 0.5);
  color: #fff;
  font-size: 41px;
  line-height: 59px;
  white-space: nowrap;
}
```
